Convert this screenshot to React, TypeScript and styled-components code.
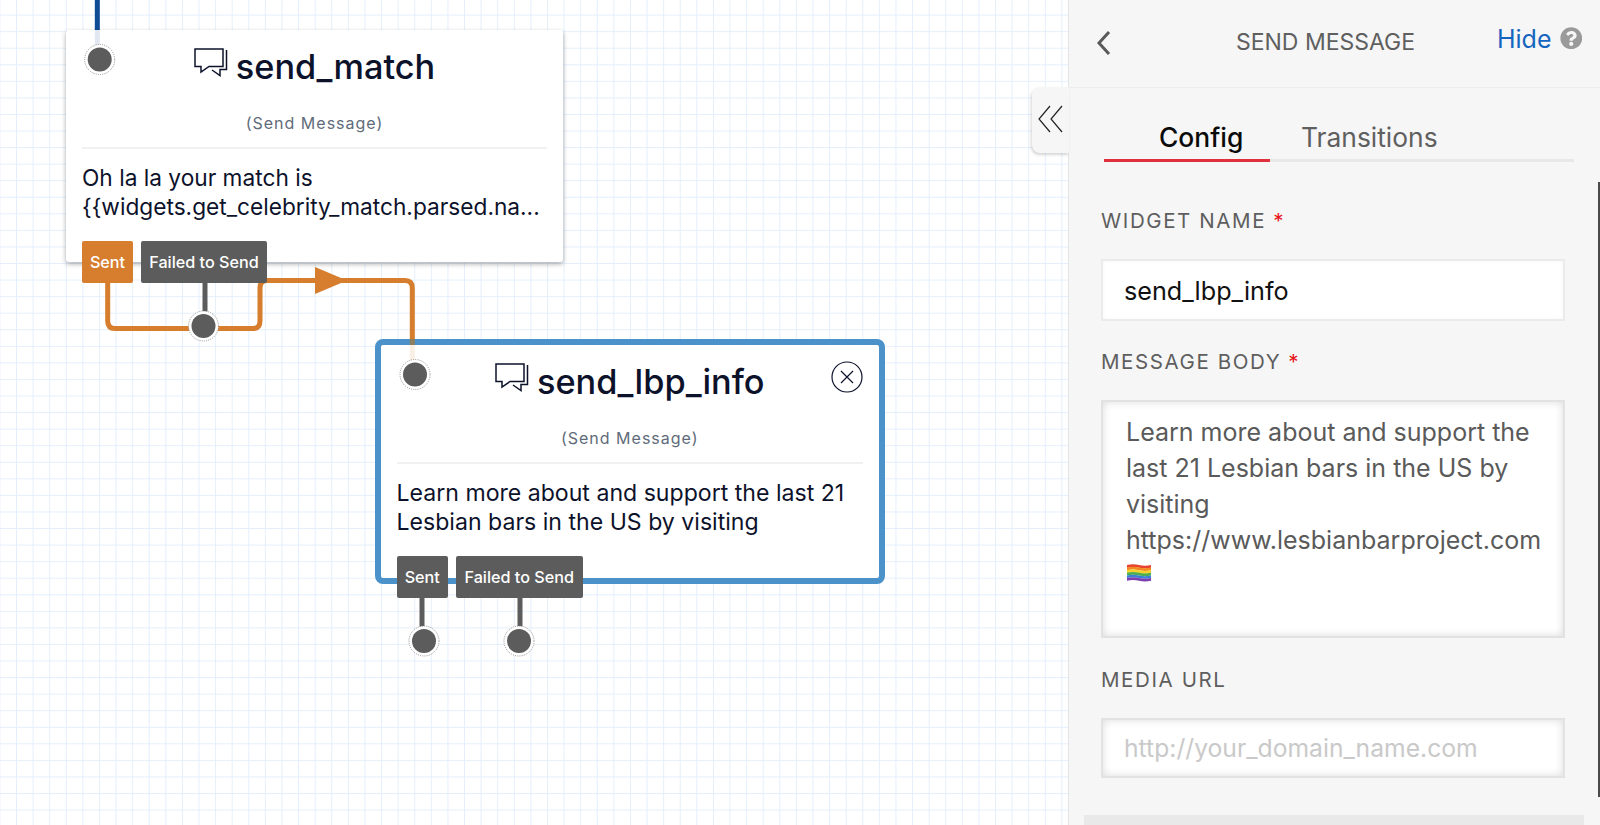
import React from "react";
import styled, { createGlobalStyle } from "styled-components";
import { FaQuestionCircle } from "react-icons/fa";

const Global = createGlobalStyle`
  html, body { margin: 0; padding: 0; height: 100%; overflow: hidden; background: #fff; }
  body { font-family: Inter, "Liberation Sans", sans-serif; }
  #root { height: 100%; }
  * { box-sizing: border-box; }
`;

const Page = styled.div`
  display: flex;
  width: 1600px;
  height: 825px;
  overflow: hidden;
`;

const Canvas = styled.div`
  position: relative;
  width: 1068px;
  height: 825px;
  flex: none;
  background-color: #fff;
  background-image:
    linear-gradient(to right, #e4effc 1px, transparent 1px),
    linear-gradient(to bottom, #e4effc 1px, transparent 1px);
  background-size: 16.6px 16.57px;
  background-position: 16px 14.6px;
`;

const WireLayer = styled.svg<{ $top?: boolean }>`
  position: absolute;
  left: 0;
  top: 0;
  width: 1068px;
  height: 825px;
  z-index: ${(p) => (p.$top ? 3 : 1)};
  pointer-events: none;
`;

const Node = styled.div<{ $x: number; $y: number; $w: number; $h: number; $selected?: boolean }>`
  position: absolute;
  left: ${(p) => p.$x}px;
  top: ${(p) => p.$y}px;
  width: ${(p) => p.$w}px;
  height: ${(p) => p.$h}px;
  z-index: 2;
  background: #fff;
  border-radius: ${(p) => (p.$selected ? 8 : 3)}px;
  border: ${(p) => (p.$selected ? "6px solid #4b91ca" : "none")};
  box-shadow: ${(p) => (p.$selected ? "none" : "0 2px 5px rgba(0,0,0,.32)")};
  padding: 16px 16px 0 16px;
`;

const TitleRow = styled.div`
  display: flex;
  align-items: center;
  justify-content: center;
  gap: 8px;
  height: 42px;
`;

const TitleText = styled.span`
  font-size: 34.3px;
  font-weight: 500;
  color: #0d122b;
  line-height: 42px;
`;

const BubbleIcon = styled.svg`
  width: 34px;
  height: 29px;
  flex: none;
  margin-top: -9px;
`;

const Kind = styled.div`
  text-align: center;
  font-size: 16px;
  letter-spacing: 1px;
  color: #606b7a;
  line-height: 20px;
  margin-top: 25px;
  padding-bottom: 14px;
  border-bottom: 2px solid #f0f1f3;
`;

const Body = styled.div<{ $size: number; $h: number }>`
  font-size: ${(p) => p.$size}px;
  line-height: 28.5px;
  color: #0d122b;
  margin-top: 15px;
  height: ${(p) => p.$h}px;
  overflow: hidden;
`;

const Ports = styled.div<{ $bottom: number }>`
  position: absolute;
  left: 16px;
  bottom: ${(p) => p.$bottom}px;
  display: flex;
  gap: 8px;
`;

const PortButton = styled.div<{ $active?: boolean; $w: number }>`
  width: ${(p) => p.$w}px;
  height: 42px;
  display: flex;
  align-items: center;
  justify-content: center;
  border-radius: 2px;
  font-size: 16.2px;
  font-weight: 500;
  color: #fff;
  background: ${(p) => (p.$active ? "#d67d2e" : "#5c5c5c")};
`;

const CloseButton = styled.svg`
  position: absolute;
  right: 16px;
  top: 16px;
  width: 32px;
  height: 32px;
`;

const Panel = styled.aside`
  position: relative;
  flex: none;
  width: 532px;
  height: 825px;
  background: #f6f6f6;
  border-left: 1px solid #e4e4e4;
  display: flex;
  flex-direction: column;
`;

const PanelHeader = styled.header`
  position: relative;
  height: 87px;
  flex: none;
  display: flex;
  align-items: center;
  justify-content: center;
  padding-bottom: 3px;
`;

const BackIcon = styled.svg`
  position: absolute;
  left: 27px;
  top: 30px;
  width: 16px;
  height: 26px;
`;

const PanelTitle = styled.div`
  font-size: 23px;
  color: #5f5f5f;
  margin-right: 18px;
`;

const HideGroup = styled.div`
  position: absolute;
  right: 18px;
  top: 24px;
  display: flex;
  align-items: center;
  gap: 8px;
`;

const HideLink = styled.a`
  font-size: 25px;
  color: #1565c0;
  line-height: 30px;
`;

const HelpSlot = styled.span`
  display: flex;
  color: #9a9a9a;
  font-size: 22.5px;
  margin-top: -2px;
`;

const PanelBody = styled.div`
  flex: 1;
  display: flex;
  flex-direction: column;
  border-top: 1px solid #ececec;
  padding: 0 0 0 32px;
  min-height: 0;
`;

const CollapseTab = styled.div`
  position: absolute;
  left: -37px;
  top: 87px;
  width: 37px;
  height: 66px;
  background: #f6f6f6;
  border-radius: 8px 0 0 8px;
  box-shadow: -1px 2px 3px rgba(0,0,0,.16);
  display: flex;
  align-items: flex-start;
  justify-content: center;
  padding-top: 18px;
  padding-right: 2px;
  z-index: 4;
`;

const Tabs = styled.div`
  display: flex;
  height: 74px;
  margin-left: 3px;
  width: 470px;
  flex: none;
  border-bottom: 3px solid #e8e8e8;
`;

const Tab = styled.div<{ $active?: boolean; $w?: number; $pad: number }>`
  width: ${(p) => (p.$w ? `${p.$w}px` : "auto")};
  height: 74px;
  padding-left: ${(p) => p.$pad}px;
  padding-top: 31px;
  line-height: 36px;
  font-size: 26.4px;
  font-weight: ${(p) => (p.$active ? 500 : 400)};
  color: ${(p) => (p.$active ? "#0a0a0a" : "#5f5f5f")};
  border-bottom: ${(p) => (p.$active ? "3px solid #e0303e" : "none")};
`;

const Label = styled.label<{ $mt: number }>`
  display: block;
  margin-top: ${(p) => p.$mt}px;
  height: 22px;
  line-height: 22px;
  font-size: 20.5px;
  letter-spacing: 1.6px;
  color: #5e5e5e;
`;

const Required = styled.span`
  color: #e6161c;
  margin-left: 7px;
`;

const Field = styled.input<{ $h: number; $mt: number; $shaded?: boolean }>`
  display: block;
  width: 464px;
  height: ${(p) => p.$h}px;
  margin-top: ${(p) => p.$mt}px;
  padding: ${(p) => (p.$shaded ? "0 21px" : "2px 21px 0")};
  flex: none;
  font-family: inherit;
  font-size: ${(p) => (p.$shaded ? 24.7 : 25.2)}px;
  color: #111;
  background: #fff;
  border: 2px solid ${(p) => (p.$shaded ? "#e2e2e2" : "#ebebeb")};
  border-radius: 0;
  outline: none;
  box-shadow: ${(p) => (p.$shaded ? "inset 0 0 9px rgba(0,0,0,.14)" : "inset 0 0 5px rgba(0,0,0,.03)")};
  &::placeholder { color: #c9c9c9; opacity: 1; }
`;

const MessageBox = styled.div`
  width: 464px;
  height: 238px;
  margin-top: 27px;
  flex: none;
  padding: 12px 10px 0 23px;
  font-size: 25px;
  line-height: 36px;
  color: #5a5a5a;
  background: #fff;
  border: 2px solid #e2e2e2;
  box-shadow: inset 0 0 9px rgba(0,0,0,.14);
`;

const FlagIcon = styled.svg`
  display: block;
  width: 24px;
  height: 18px;
  margin-top: 6px;
  margin-left: 1px;
`;

const Footer = styled.div`
  position: absolute;
  left: 15px;
  bottom: 0;
  width: 500px;
  height: 10px;
  background: #e9e9e9;
`;

const Scrollbar = styled.div`
  position: absolute;
  right: 0;
  top: 182px;
  width: 2px;
  height: 615px;
  background: #4a4a4a;
`;

const Bubble = () => (
  <BubbleIcon viewBox="0 0 34 29" fill="none" stroke="#0d122b" strokeWidth="1.5">
    <path d="M1 1H29V18.5H15L7 24V18.5H1Z" />
    <path d="M32.5 2V21.5H26V27.5L18 22" />
  </BubbleIcon>
);

const Port = ({ x, y }: { x: number; y: number }) => (
  <g>
    <circle cx={x} cy={y} r="15" fill="#fff" stroke="#777" strokeWidth="0.8" strokeDasharray="1 1.2" />
    <circle cx={x} cy={y} r="12" fill="#5c5c5c" />
  </g>
);

const stripes = ["#e8432f", "#f28b1f", "#f6d32a", "#4cae4f", "#3a7fd6", "#7b3fb0"];

export default function App() {
  return (
    <Page>
      <Global />
      <Canvas>
        <WireLayer viewBox="0 0 1068 825" fill="none">
          <path d="M97.3 0V30" stroke="#0f4c96" strokeWidth="5" />
          <path
            d="M107.7 283V321Q107.7 328.5 115 328.5H253Q260 328.5 260 321V288Q260 280.5 267 280.5H405Q412.3 280.5 412.3 288V339"
            stroke="#d67d2e"
            strokeWidth="5"
          />
          <path d="M315 267L347 280.5L315 294Z" fill="#d67d2e" />
        </WireLayer>

        <Node $x={66} $y={30} $w={497} $h={232}>
          <TitleRow>
            <Bubble />
            <TitleText>send_match</TitleText>
          </TitleRow>
          <Kind>(Send Message)</Kind>
          <Body $size={22.7} $h={58}>
            Oh la la your match is
            <br />
            {"{{widgets.get_celebrity_match.parsed.na..."}
          </Body>
          <Ports $bottom={-21}>
            <PortButton $active $w={51}>Sent</PortButton>
            <PortButton $w={126}>Failed to Send</PortButton>
          </Ports>
        </Node>

        <Node $x={374.5} $y={339} $w={510.5} $h={245} $selected>
          <TitleRow>
            <Bubble />
            <TitleText>send_lbp_info</TitleText>
          </TitleRow>
          <Kind>(Send Message)</Kind>
          <Body $size={23.1} $h={58}>
            Learn more about and support the last 21 Lesbian bars in the US by visiting
          </Body>
          <CloseButton viewBox="0 0 32 32" fill="none" stroke="#0d122b" strokeWidth="1.2">
            <circle cx="16" cy="16" r="15" />
            <path d="M10 10L22 22M22 10L10 22" />
          </CloseButton>
          <Ports $bottom={-20}>
            <PortButton $w={51.5}>Sent</PortButton>
            <PortButton $w={126.5}>Failed to Send</PortButton>
          </Ports>
        </Node>

        <WireLayer $top viewBox="0 0 1068 825" fill="none">
          <path d="M97.3 30V46" stroke="#e2e8f1" strokeWidth="5" />
          <path d="M412.3 339V345" stroke="#8c7f5e" strokeWidth="5" />
          <path d="M412.3 345V362" stroke="#faefe4" strokeWidth="5" />
          <path d="M205 283V318" stroke="#5c5c5c" strokeWidth="5" />
          <path d="M422 598V630M520 598V630" stroke="#5c5c5c" strokeWidth="5" />
          <Port x={99.7} y={59.5} />
          <Port x={203.5} y={326} />
          <Port x={415} y={374.5} />
          <Port x={424} y={641} />
          <Port x={519} y={641} />
        </WireLayer>
      </Canvas>

      <Panel>
        <PanelHeader>
          <BackIcon viewBox="0 0 16 26" fill="none" stroke="#5a5a5a" strokeWidth="3">
            <path d="M13 2L3 13L13 24" />
          </BackIcon>
          <PanelTitle>SEND MESSAGE</PanelTitle>
          <HideGroup>
            <HideLink>Hide</HideLink>
            <HelpSlot>
              <FaQuestionCircle />
            </HelpSlot>
          </HideGroup>
        </PanelHeader>
        <CollapseTab>
          <svg width="26" height="28" viewBox="0 0 26 28" fill="none" stroke="#222" strokeWidth="1.2">
            <path d="M13 1L2 14L13 27M25 1L14 14L25 27" />
          </svg>
        </CollapseTab>
        <PanelBody>
          <Tabs>
            <Tab $active $w={166} $pad={55}>Config</Tab>
            <Tab $pad={31}>Transitions</Tab>
          </Tabs>
          <Label $mt={48}>
            WIDGET NAME<Required>*</Required>
          </Label>
          <Field $mt={27} $h={62} readOnly value="send_lbp_info" />
          <Label $mt={30}>
            MESSAGE BODY<Required>*</Required>
          </Label>
          <MessageBox>
            Learn more about and support the last 21 Lesbian bars in the US by visiting
            <br />
            https://www.lesbianbarproject.com
            <FlagIcon viewBox="0 0 24 18">
              {stripes.map((c, i) => (
                <path key={c} d={`M0 ${1 + i * 2.6}Q6 ${-0.5 + i * 2.6} 12 ${1 + i * 2.6}T24 ${1 + i * 2.6}V${3.7 + i * 2.6}Q18 ${5.2 + i * 2.6} 12 ${3.7 + i * 2.6}T0 ${3.7 + i * 2.6}Z`} fill={c} />
              ))}
            </FlagIcon>
          </MessageBox>
          <Label $mt={31}>MEDIA URL</Label>
          <Field $mt={27} $h={60} $shaded readOnly placeholder="http://your_domain_name.com" />
        </PanelBody>
        <Scrollbar />
        <Footer />
      </Panel>
    </Page>
  );
}
